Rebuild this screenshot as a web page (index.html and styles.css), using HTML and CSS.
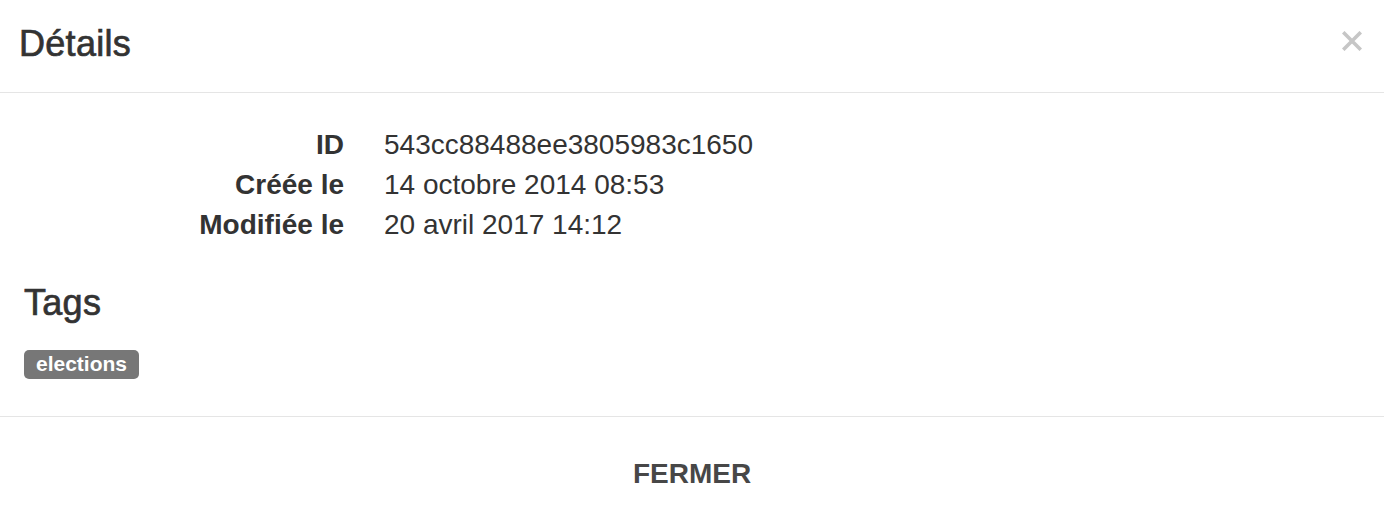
FILE: index.html
```html
<!DOCTYPE html>
<html lang="fr">
<head>
<meta charset="utf-8">
<title>Détails</title>
<link rel="stylesheet" href="styles.css">
</head>
<body>
<div class="modal">
  <div class="modal-header">
    <h3 class="modal-title">Détails</h3>
    <button class="close" type="button" aria-label="Fermer">
      <svg width="20" height="20" viewBox="0 0 20 20"><path d="M2.5 2.5 L17.5 17.5 M17.5 2.5 L2.5 17.5" stroke="#c6c6c6" stroke-width="3.6" stroke-linecap="square"/></svg>
    </button>
  </div>
  <div class="modal-body">
    <dl class="details">
      <dt>ID</dt><dd>543cc88488ee3805983c1650</dd>
      <dt>Créée le</dt><dd>14 octobre 2014 08:53</dd>
      <dt>Modifiée le</dt><dd>20 avril 2017 14:12</dd>
    </dl>
    <h4 class="section-title">Tags</h4>
    <div class="tags"><span class="label">elections</span></div>
  </div>
  <div class="modal-footer">
    <button class="btn-close" type="button">FERMER</button>
  </div>
</div>
</body>
</html>
```

FILE: styles.css
```css
html, body {
  margin: 0;
  padding: 0;
  background: #fff;
}
body {
  font-family: "Liberation Sans", Arial, Helvetica, sans-serif;
  color: #333;
}
.modal {
  width: 1384px;
  height: 524px;
  overflow: hidden;
}
.modal-header {
  display: flex;
  justify-content: space-between;
  align-items: flex-start;
  padding: 24px 22px 28px 19px;
  border-bottom: 1px solid #e5e5e5;
}
.modal-title {
  margin: 0;
  font-size: 36px;
  font-weight: normal;
  letter-spacing: 0.3px;
  -webkit-text-stroke: 0.7px #333;
  line-height: 40px;
  color: #333;
}
.close {
  margin-top: 7px;
  padding: 0;
  border: 0;
  background: none;
  width: 20px;
  height: 20px;
  display: flex;
}
.modal-body {
  padding: 32px 24px 37px;
}
.details {
  display: grid;
  grid-template-columns: 320px 1fr;
  column-gap: 40px;
  margin: 0;
  font-size: 28px;
  line-height: 40px;
}
.details dt {
  font-weight: bold;
  text-align: right;
}
.details dd {
  margin: 0;
}
.section-title {
  margin: 38px 0 27px;
  font-size: 36px;
  font-weight: normal;
  letter-spacing: 0.3px;
  -webkit-text-stroke: 0.7px #333;
  line-height: 40px;
}
.tags {
  display: flex;
}
.label {
  display: inline-block;
  background: #777;
  color: #fff;
  font-size: 21px;
  font-weight: bold;
  line-height: 21px;
  padding: 3px 12px 5px;
  border-radius: 5px;
}
.modal-footer {
  border-top: 1px solid #e5e5e5;
  padding: 37px 0 30px;
  display: flex;
  justify-content: center;
}
.btn-close {
  border: 0;
  background: none;
  padding: 0;
  font-family: "Liberation Sans", Arial, Helvetica, sans-serif;
  font-size: 28px;
  font-weight: bold;
  line-height: 40px;
  color: #474747;
}
```
